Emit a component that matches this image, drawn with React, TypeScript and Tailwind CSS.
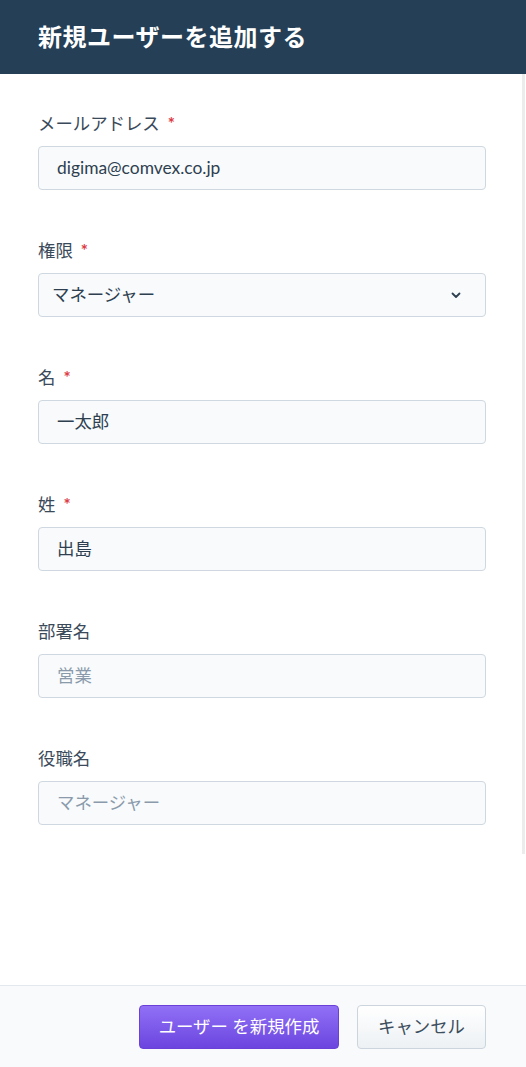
import React from "react";

const font = { fontFamily: '"Lato", "Noto Sans CJK JP", sans-serif' };

function Label({ text, required }: { text: string; required?: boolean }) {
  return (
    <div className="h-6 leading-6 text-[17.4px] text-[#3a4a5a] mb-[10px] flex items-center">
      <span>{text}</span>
      {required && <span className="ml-[8px] text-[#dc3a44] text-[17px] font-bold leading-6">*</span>}
    </div>
  );
}

function Field({ label, required, value, placeholder }: { label: string; required?: boolean; value?: string; placeholder?: string }) {
  return (
    <div>
      <Label text={label} required={required} />
      <div className="h-[44px] rounded-[4px] border border-[#cfd8e0] bg-[#f8fafc] flex items-center pl-[18px] text-[17.4px]">
        {value ? (
          <span className="text-[#2e3f50]">{value}</span>
        ) : (
          <span className="text-[#8a9aab]">{placeholder}</span>
        )}
      </div>
    </div>
  );
}

export default function App() {
  return (
    <div className="w-[526px] h-[1067px] bg-white flex flex-col relative overflow-hidden" style={font}>
      <div className="h-[74px] bg-[#243f56] flex items-center pl-[38px] shrink-0">
        <h1 className="text-white text-[24px] font-bold tracking-[0.5px]">新規ユーザーを追加する</h1>
      </div>
      <div className="flex-1 pl-[38px] pr-[40px] pt-[38px] flex flex-col gap-[49px]">
        <Field label="メールアドレス" required value="digima@comvex.co.jp" />
        <div>
          <Label text="権限" required />
          <div className="h-[44px] rounded-[4px] border border-[#cfd8e0] bg-[#f8fafc] flex items-center justify-between pl-[13px] pr-[24px] text-[17.4px]">
            <span className="text-[#2e3f50]">マネージャー</span>
            <svg width="10" height="7" viewBox="0 0 10 7" fill="none">
              <path d="M1.5 1.5 L5 5 L8.5 1.5" stroke="#2e3f50" strokeWidth="1.8" strokeLinecap="round" strokeLinejoin="round" />
            </svg>
          </div>
        </div>
        <Field label="名" required value="一太郎" />
        <Field label="姓" required value="出島" />
        <Field label="部署名" placeholder="営業" />
        <Field label="役職名" placeholder="マネージャー" />
      </div>
      <div className="absolute right-[1px] top-[74px] w-[3px] h-[780px] bg-[#ececec]" />
      <div className="h-[82px] shrink-0 border-t border-[#e3e8ee] bg-[#f9fafb] flex items-start justify-end pt-[19px] pr-[40px] gap-[18px]">
        <button className="w-[200px] h-[44px] rounded-[4px] border border-[#6a40d8] bg-gradient-to-b from-[#9170f6] to-[#6c44df] text-white text-[17.4px]">
          ユーザー を新規作成
        </button>
        <button className="w-[129px] h-[44px] rounded-[4px] border border-[#ccd5dd] bg-gradient-to-b from-[#ffffff] to-[#edf1f4] text-[#3d4e5e] text-[17.4px]">
          キャンセル
        </button>
      </div>
    </div>
  );
}
